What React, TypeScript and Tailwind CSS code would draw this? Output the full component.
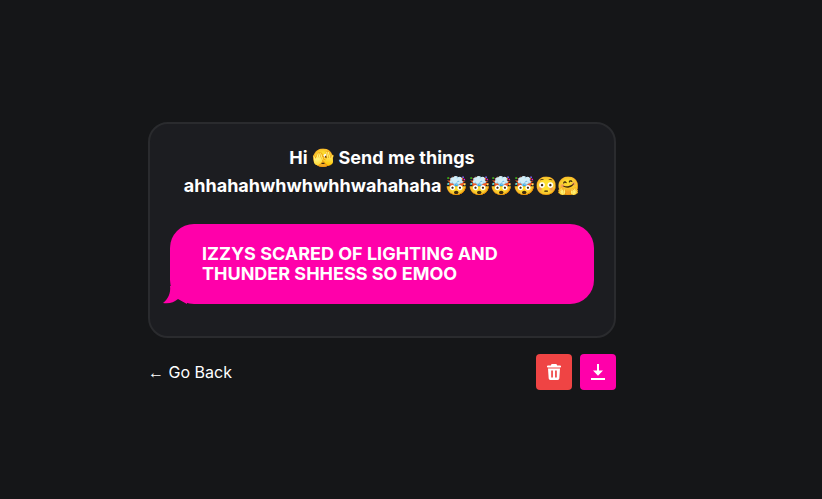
import React from 'react';

const App: React.FC = () => {
  return (
    <div className="min-h-[499px] bg-[#151618] pl-[148px] pt-[122px] font-['Inter','Noto_Color_Emoji',sans-serif] text-white">
      <div className="w-[468px]">
        <div className="rounded-[20px] border-2 border-[#2a2b2e] bg-[#1c1d21] px-5 pt-5 pb-8">
          <p className="text-center text-lg leading-7 font-bold">
            Hi 🫣 Send me things ahhahahwhwhwhhwahahaha 🤯🤯🤯🤯😳🤗
          </p>
          <div className="relative mt-6">
            <div className="rounded-[24px] bg-[#ff00aa] px-8 py-5 text-lg leading-5 font-bold">
              IZZYS SCARED OF LIGHTING AND THUNDER SHHESS SO EMOO
            </div>
            <svg className="absolute bottom-0 -left-[7px]" width="24" height="18" viewBox="0 0 24 18">
              <path d="M7 0 C8 7 5 13 0 17 C6 18 11 16.5 15 13 L24 18 L24 0 Z" fill="#ff00aa" />
            </svg>
          </div>
        </div>
        <div className="mt-4 flex items-center justify-between">
          <a className="text-base leading-6">
            <span className="font-['Liberation_Sans',sans-serif]">←</span> Go Back
          </a>
          <div className="flex gap-2">
            <button className="flex h-9 w-9 items-center justify-center rounded bg-[#ef4444]">
              <svg width="14" height="16" viewBox="0 0 14 16" fill="white">
                <path d="M4.6 0 H9.4 L10.2 1.6 H13.2 a0.9 0.9 0 0 1 0 1.8 H0.8 a0.9 0.9 0 0 1 0 -1.8 H3.8 Z" />
                <path fillRule="evenodd" d="M1 4.4 H13 L12.3 14.5 a1.6 1.6 0 0 1 -1.6 1.5 H3.3 a1.6 1.6 0 0 1 -1.6 -1.5 Z M4.2 6.6 V13.6 H5.9 V6.6 Z M8.1 6.6 V13.6 H9.8 V6.6 Z" />
              </svg>
            </button>
            <button className="flex h-9 w-9 items-center justify-center rounded bg-[#ff00aa]">
              <svg width="14" height="16" viewBox="0 0 14 16" fill="white">
                <path d="M6 0 H8 V6.5 H12 L7 11.8 L2 6.5 H6 Z" />
                <rect x="0" y="14" width="14" height="2" />
              </svg>
            </button>
          </div>
        </div>
      </div>
    </div>
  );
};

export default App;
